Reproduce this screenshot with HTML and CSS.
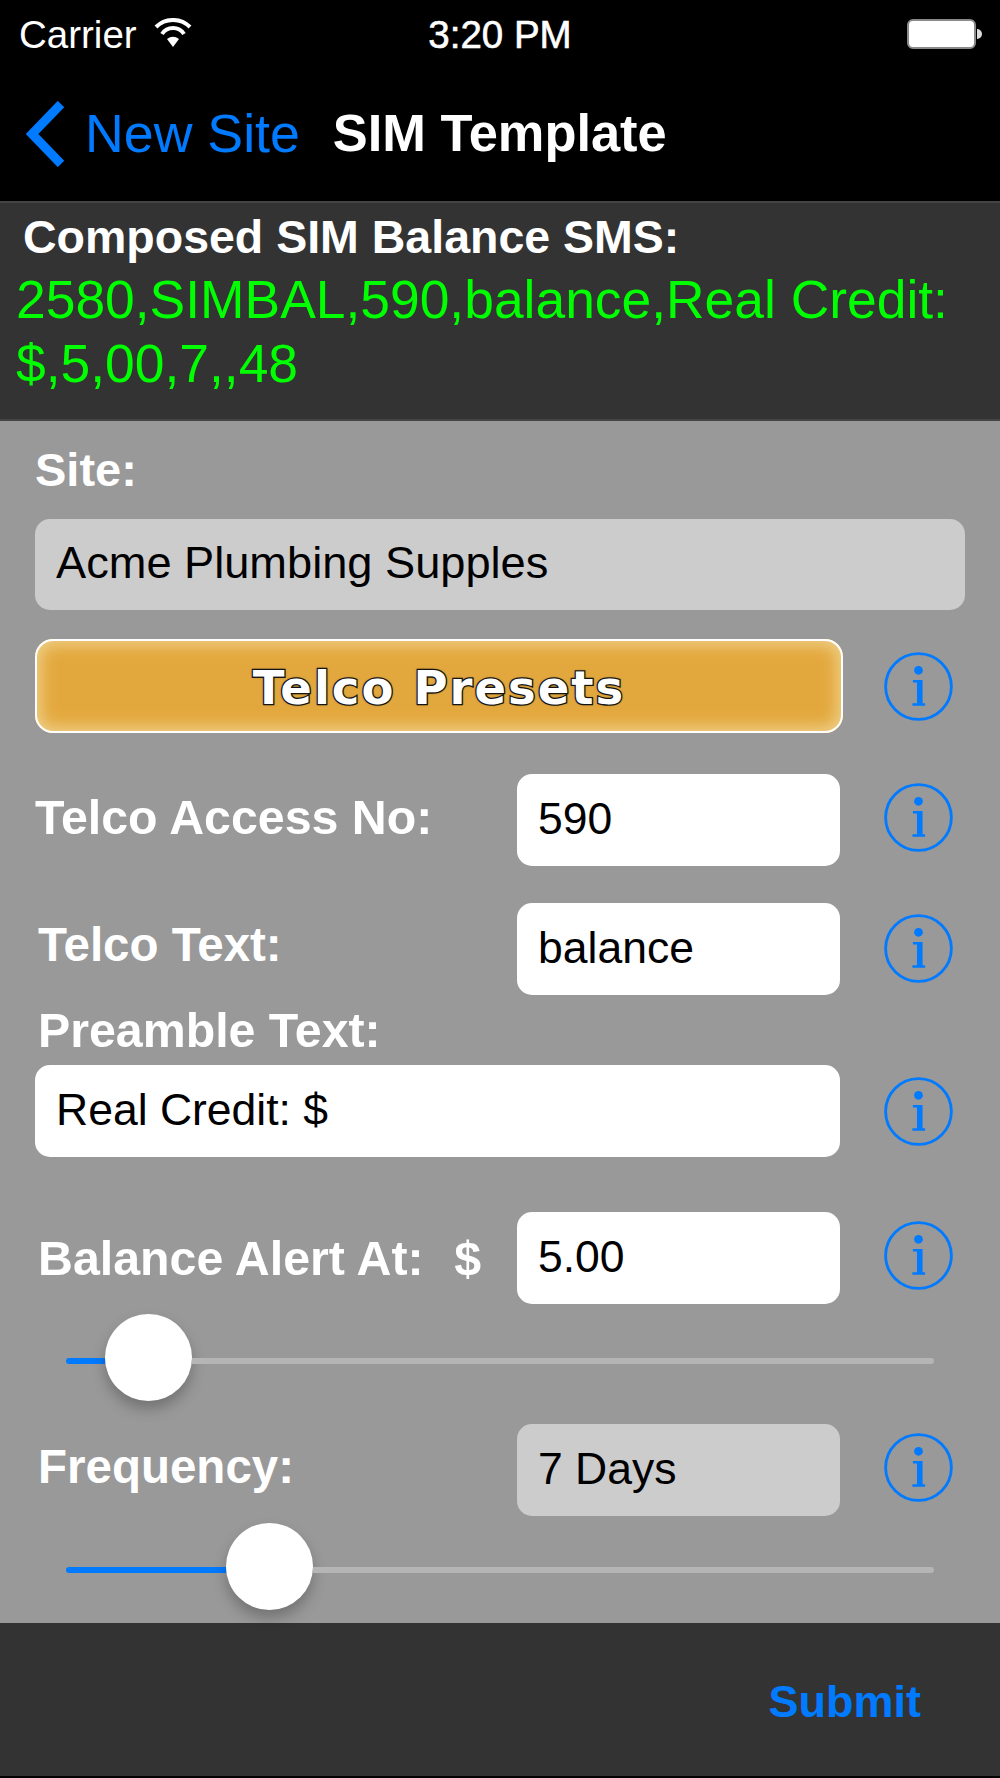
FILE: index.html
```html
<!DOCTYPE html>
<html lang="en">
<head>
<meta charset="utf-8">
<title>SIM Template</title>
<link rel="stylesheet" href="styles.css">
</head>
<body>
<header class="top">
  <div class="status">
    <div class="status-left">
      <span>Carrier</span>
      <svg class="wifi" viewBox="0 0 38 30"><path d="M13 21 A10 10 0 0 1 25 21 L19 29 Z" fill="#fff"/><path d="M8 16 A13.100 13.100 0 0 1 30 16" fill="none" stroke="#fff" stroke-width="4"/><path d="M2 9 A24.100 24.100 0 0 1 36 9" fill="none" stroke="#fff" stroke-width="4"/></svg>
    </div>
    <span class="clock">3:20 PM</span>
    <div class="battery"><div class="battery-body"></div><div class="battery-tip"></div></div>
  </div>
  <nav class="nav">
    <svg class="chevron" viewBox="0 0 40 66"><path d="M35 3 L6 33 L35 63" fill="none" stroke="#007aff" stroke-width="9"/></svg>
    <span class="back">New Site</span>
    <span class="title">SIM Template</span>
  </nav>
</header>
<section class="composed">
  <h2 class="composed-label">Composed SIM Balance SMS:</h2>
  <p class="composed-text">2580,SIMBAL,590,balance,Real Credit:<br>$,5,00,7,,48</p>
</section>
<main class="form">
  <div class="label site-label">Site:</div>
  <div class="field field-disabled site-field">Acme Plumbing Supples</div>
  <div class="row presets-row">
    <button class="presets">Telco Presets</button>
    <svg class="info" viewBox="0 0 68 68"><use href="#i"/></svg>
  </div>
  <div class="row access-row">
    <span class="label grow raised">Telco Access No:</span>
    <div class="field small">590</div>
    <svg class="info info-raised" viewBox="0 0 68 68"><use href="#i"/></svg>
  </div>
  <div class="row text-row">
    <span class="label grow inset raised tight">Telco Text:</span>
    <div class="field small">balance</div>
    <svg class="info" viewBox="0 0 68 68"><use href="#i"/></svg>
  </div>
  <div class="label inset preamble-label">Preamble Text:</div>
  <div class="row preamble-row">
    <div class="field wide">Real Credit: $</div>
    <svg class="info" viewBox="0 0 68 68"><use href="#i"/></svg>
  </div>
  <div class="row balance-row">
    <span class="label grow inset">Balance Alert At:</span>
    <span class="label dollar">$</span>
    <div class="field small">5.00</div>
    <svg class="info info-raised" viewBox="0 0 68 68"><use href="#i"/></svg>
  </div>
  <div class="slider slider-one">
    <div class="fill" style="width:39px"></div>
    <div class="knob"></div>
    <div class="rest"></div>
  </div>
  <div class="row freq-row">
    <span class="label grow inset raised tight">Frequency:</span>
    <div class="field small field-disabled">7 Days</div>
    <svg class="info info-raised" viewBox="0 0 68 68"><use href="#i"/></svg>
  </div>
  <div class="slider slider-two">
    <div class="fill" style="width:160px"></div>
    <div class="knob"></div>
    <div class="rest"></div>
  </div>
</main>
<footer class="footer"><span class="submit">Submit</span></footer>
<svg class="defs" width="0" height="0"><defs><g id="i"><circle cx="34" cy="34" r="32.400" fill="none" stroke="#007aff" stroke-width="2.800"/><circle cx="34" cy="18" r="4.300" fill="#007aff"/><path d="M28.500 27.500 H38 V50.500 H40.500 V53 H28 V50.500 H32.500 V30 H28.500 Z" fill="#007aff"/></g></defs></svg>
</body>
</html>
```
FILE: styles.css
```css
* { box-sizing: border-box; }
html, body { margin: 0; padding: 0; }
body {
  width: 1000px;
  height: 1778px;
  background: #000;
  font-family: "Liberation Sans", Arial, sans-serif;
  overflow: hidden;
}
.top { height: 201px; background: #000; color: #fff; }
.status {
  height: 68px;
  padding: 2px 0 0 19px;
  display: flex;
  align-items: center;
  justify-content: space-between;
  font-size: 38.500px;
}
.status-left { display: flex; align-items: center; gap: 17px; width: 300px; }
.wifi { width: 38px; height: 30px; margin-bottom: 5px; flex: none; }
.clock { -webkit-text-stroke: 0.6px #fff; }
.battery { width: 319px; display: flex; justify-content: flex-end; align-items: center; padding-right: 18px; margin-bottom: 2px; }
.battery-body { width: 69px; height: 30px; background: #fff; border: 2px solid #8a8a8a; border-radius: 6px; }
.battery-tip { width: 5px; height: 10px; margin-left: 1px; background: #ddd; border-radius: 0 5px 5px 0; }
.nav { height: 133px; display: flex; align-items: center; padding: 0 0 0 26px; font-size: 53.700px; }
.chevron { width: 40px; height: 66px; margin-top: -1px; flex: none; }
.back { color: #007aff; margin: 0 0 4px 19px; }
.title { margin: 0 0 4px 33px; font-weight: 700; font-size: 52.400px; }
.composed { height: 220px; background: #333; border-top: 2px solid #444; border-bottom: 2px solid #444; padding: 0 16px; }
.composed-label { margin: 9px 0 0 7px; font-size: 46.500px; line-height: 50px; font-weight: 700; color: #fff; }
.composed-text { margin: 6px 0 0; font-size: 53.400px; line-height: 64px; color: #0f0; }
.form { height: 1202px; background: #999; padding: 29px 35px 0; }
.label { color: #fff; font-size: 48.300px; line-height: 40px; font-weight: 700; }
.site-label { font-size: 47px; }
.tight { font-size: 47.500px; }
.inset { padding-left: 3px; }
.grow { flex: 1; }
.raised { margin-bottom: 7px; }
.dollar { margin-right: 36px; }
.field {
  height: 92px;
  border-radius: 15px;
  background: #fff;
  color: #000;
  font-size: 44.500px;
  line-height: 90px;
  padding-left: 21px;
  flex: none;
}
.field-disabled { background: #ccc; }
.site-field { margin-top: 29px; width: 930px; height: 91px; line-height: 88px; font-size: 45.200px; }
.row { display: flex; align-items: center; }
.info { width: 69px; height: 69px; margin-left: auto; margin-right: 12px; flex: none; }
.info-raised { margin-bottom: 5px; }
.presets-row { margin-top: 29px; height: 94px; }
.presets {
  width: 808px;
  height: 94px;
  padding: 4px 0 0;
  border: 0;
  border-radius: 18px;
  background: #e3a83d;
  box-shadow: inset 0 0 0 2px #fff, inset 0 0 16px 6px #efd08a;
  color: #fff;
  font-family: "DejaVu Sans", sans-serif;
  font-weight: 700;
  font-size: 46.500px;
  letter-spacing: 2px;
  -webkit-text-stroke: 2.600px #1a1a1a;
  paint-order: stroke fill;
  text-shadow: 0 0 3px rgba(0,0,0,.6);
}
.small { width: 323px; margin-right: 44px; }
.wide { width: 805px; }
.access-row { margin-top: 41px; height: 92px; }
.text-row { margin-top: 37px; height: 91px; }
.preamble-label { margin-top: 16px; }
.preamble-row { margin-top: 15px; height: 92px; }
.balance-row { margin-top: 55px; height: 91px; }
.freq-row { margin-top: 23px; height: 92px; }
.slider { height: 87px; display: flex; align-items: center; margin-left: 31px; margin-right: 31px; }
.slider-one { margin-top: 11px; }
.slider-two { margin-top: 7px; }
.fill, .rest { height: 6px; margin-top: 7px; }
.fill { background: #007aff; flex: none; border-radius: 3px 0 0 3px; }
.rest { background: #b5b5b5; flex: 1; border-radius: 0 3px 3px 0; }
.knob { width: 87px; height: 87px; flex: none; border-radius: 50%; background: #fff; box-shadow: 0 8px 14px rgba(0,0,0,.25); }
.footer { height: 153px; background: #333; display: flex; align-items: center; justify-content: flex-end; padding: 5px 79px 0 0; }
.submit { color: #007aff; font-size: 45px; font-weight: 700; }
.defs { position: absolute; }
```
